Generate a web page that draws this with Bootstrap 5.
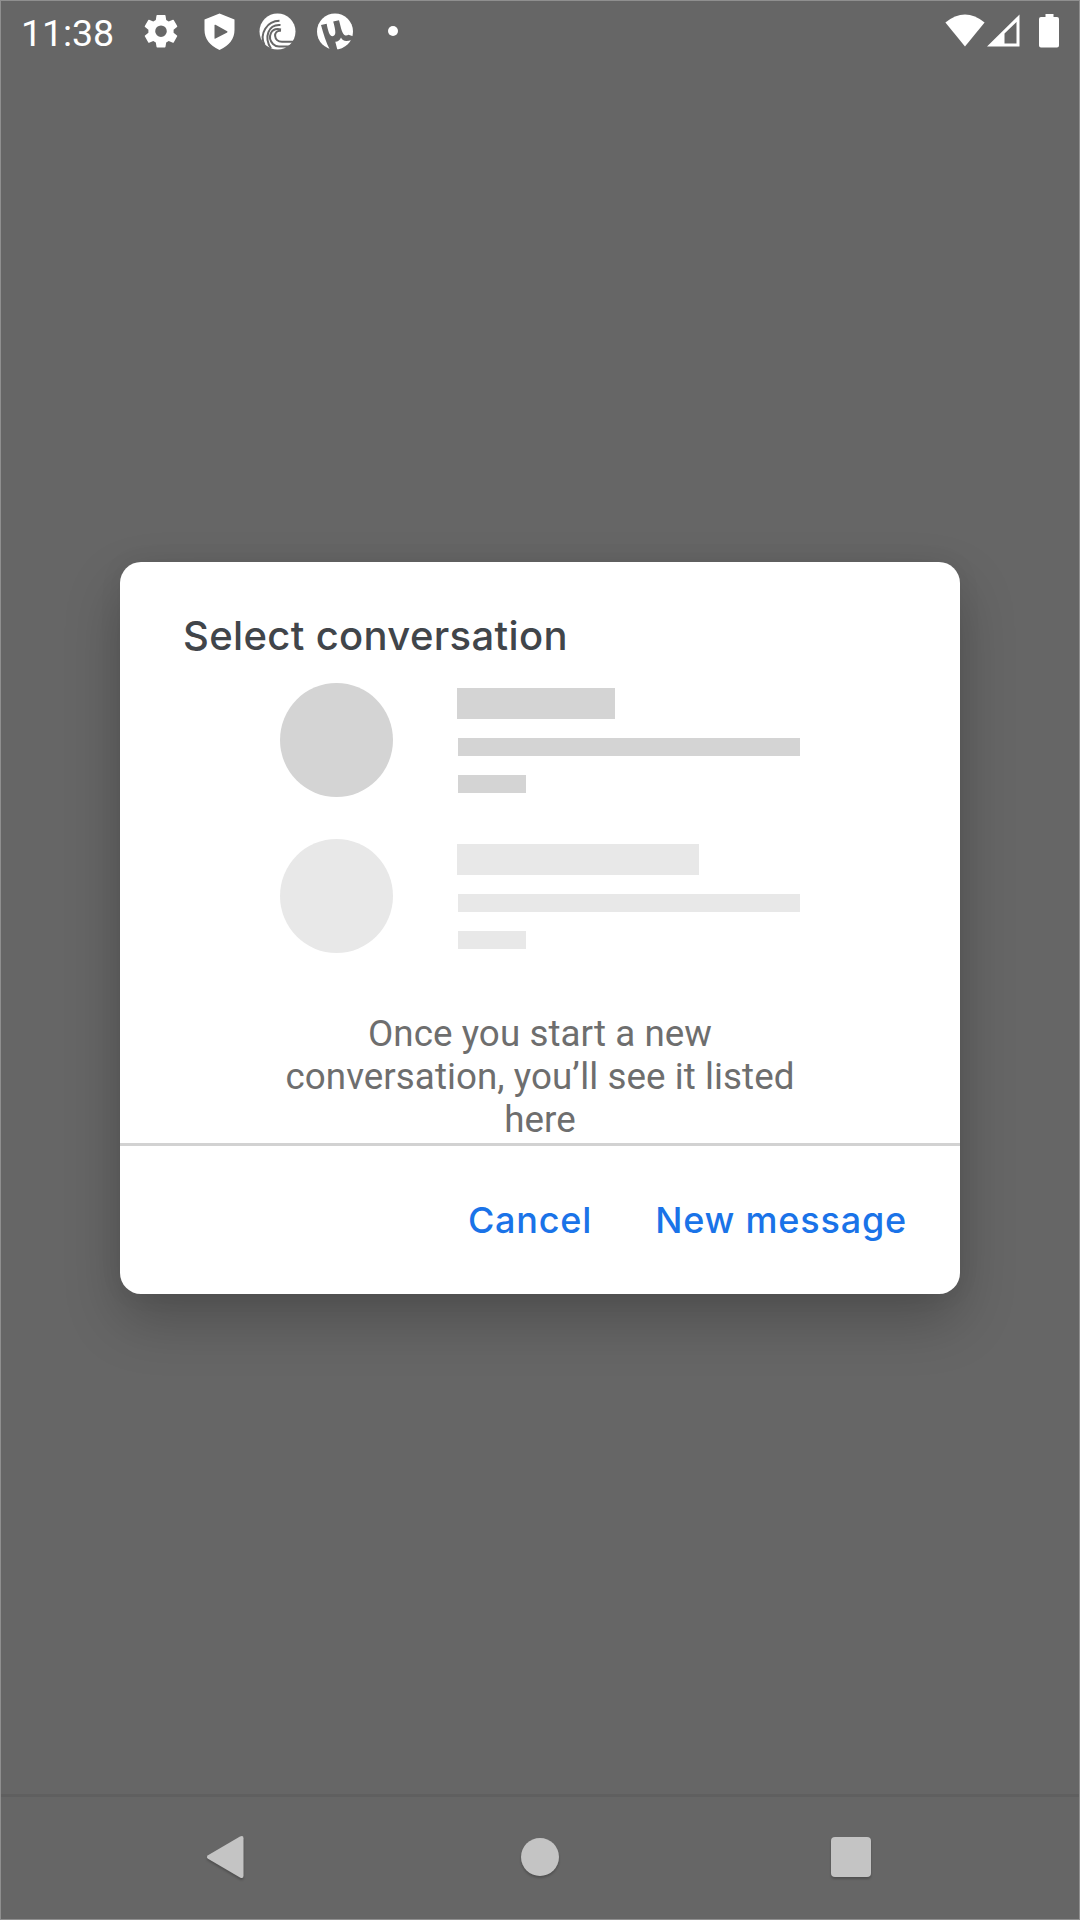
<!DOCTYPE html>
<html lang="en">
<head>
<meta charset="utf-8">
<meta name="viewport" content="width=device-width, initial-scale=1">
<title>Select conversation</title>
<link rel="stylesheet" href="https://cdn.jsdelivr.net/npm/bootstrap@5.3.0/dist/css/bootstrap.min.css">
<style>
body{background:#666;font-family:Roboto,sans-serif}
.screen{width:1080px;height:1920px;border:1px solid #8f8f8f;background:#666;overflow:hidden}
.statusbar{height:62px;padding:12px 19px 0 20px;color:#fff}
.statusbar svg{display:block;flex:none}
.clock{font-size:37.5px;line-height:40px;width:122px;letter-spacing:-.1px;white-space:nowrap}
.notif{gap:20px}
.stage{padding:499px 119px 0}
.dialog-box{height:732px;border-radius:21px;background:#fff;box-shadow:0 26px 56px rgba(0,0,0,.23),0 0 24px rgba(0,0,0,.06)}
.dialog-title{font:500 40px/48px Inter,sans-serif;letter-spacing:.34px;color:#41454a;margin:50px 0 0 63px;white-space:nowrap}
.placeholder-list{margin:23px 0 0 160px;gap:42px}
.conv{gap:64px;height:114px;color:#d4d4d4}
.conv.faint{color:#e8e8e8}
.avatar-dot{width:113px;height:114px;border-radius:50%;background:currentColor}
.bars{padding-top:5px}
.bars div{background:currentColor;height:18px;margin-left:1px}
.bars .b-name{height:31px;width:158px;margin:0 0 19px}
.faint .b-name{width:242px}
.bars .b-long{width:342px;margin-bottom:19px}
.bars .b-short{width:68px}
.hint{font-size:36.75px;line-height:43px;letter-spacing:.06px;color:#6e6e6e;margin-top:59px;height:131px;white-space:nowrap}
.rule{height:3px;background:#d2d2d2}
.actions{padding:50px 53px 0 0;gap:63px}
.act{border:0;background:none;padding:0;color:#1a73e8;font:500 36px/48px Inter,sans-serif;letter-spacing:.8px;white-space:nowrap}
.navbar-sys{height:125px;border-top:3px solid #5f5f5f}
.navbar-sys svg{display:block;filter:drop-shadow(0 2px 1px rgba(0,0,0,.22))}
</style>
<script src="https://cdn.jsdelivr.net/npm/bootstrap@5.3.0/dist/js/bootstrap.bundle.min.js"></script>
</head>
<body>
<div class="screen d-flex flex-column">
  <header class="statusbar d-flex align-items-start">
    <div class="clock"><span>11:38</span></div>
    <div class="d-flex notif">
      <!-- settings -->
      <svg width="38" height="38" viewBox="0 0 38 38"><path fill="#fff" fill-rule="evenodd" d="M14.200 2h7.600q.6 0 .7.600l.7 4.300 2.500 1.500 4.200-1.700q.5-.2.800.3l3.500 6.100q.3.500-.2.900l-3.400 2.700v3l3.400 2.700q.5.400.2.900l-3.500 6.100q-.3.500-.8.300l-4.200-1.700-2.500 1.500-.7 4.300q-.1.600-.7.600h-7.600q-.6 0-.7-.600l-.7-4.300-2.500-1.500-4.200 1.700q-.5.200-.8-.3l-3.500-6.100q-.3-.5.200-.9l3.400-2.700v-3l-3.400-2.700q-.5-.4-.2-.9l3.500-6.100q.3-.5.800-.3l4.200 1.700 2.500-1.500.7-4.300q.1-.6.700-.600zM18 12.400a5.800 5.800 0 1 0 0 11.600a5.800 5.800 0 1 0 0-11.600z"/></svg>
      <!-- play protect -->
      <svg width="38" height="38" viewBox="0 0 38 38"><path fill="#fff" fill-rule="evenodd" d="M18.500.5L33.500 6.400V17q0 13-15 20Q3.500 30 3.500 17V6.400zM13.500 12v13.400q.4.500 1 .2l11.700-6.200q.6-.6 0-1.200L14.500 11.800q-.7-.3-1 .2z"/></svg>
      <!-- bittorrent -->
      <svg width="38" height="38" viewBox="0 0 38 38"><circle cx="18.500" cy="18.500" r="18" fill="#fff"/><g fill="none" stroke="#666" stroke-width="2"><path d="M20.500 7.800C8 8 0 20.500 5.500 32"/><path d="M21.500 12C9.500 11 4.500 24 12 35.500"/><path d="M22 16.500C11.500 14 8 24.500 14 31Q16.500 33.500 20 33.500H31"/><path d="M22 17.800c-8.500-1-7.500 11 1 11H36"/></g></svg>
      <!-- utorrent -->
      <svg width="36" height="38" viewBox="0 0 36 38"><circle cx="18" cy="18.500" r="18" fill="#fff"/><path fill="#666" d="M4 12L9.700 10.700C11 18 12.500 23 15.500 23.200C19.500 23 18.800 18 16.200 8.600L22 7.300C24 15 25.400 22.300 28.500 22.500Q30.300 22.700 31.500 21.700L36.500 23.500L34.500 27Q26 29.800 24 24.500Q22.500 28.500 18.300 28.800L20.700 38H13.500C8.800 29 6.400 21 4 12z"/></svg>
      <svg width="38" height="38" viewBox="0 0 38 38"><circle cx="20" cy="18" r="5" fill="#fff"/></svg>
    </div>
    <div class="d-flex ms-auto">
      <svg width="40" height="38" viewBox="0 0 40 38"><path fill="#fff" d="M.4 9.500Q20 -6.500 39.600 9.500L20 33.500z"/></svg>
      <svg width="53" height="38" viewBox="0 0 53 38"><path fill="#fff" fill-rule="evenodd" d="M2 33.500L34.500 1.500V33.500zM31.500 9V30.500H19.500V20.500z"/></svg>
      <svg width="22" height="38" viewBox="0 0 22 38"><path fill="#fff" d="M7.500 1h8v3h3.500q2 0 2 2v26.500q0 2-2 2H3q-2 0-2-2V6q0-2 2-2h4.500z"/></svg>
    </div>
  </header>
  <main class="stage flex-grow-1">
    <section class="dialog-box d-flex flex-column">
      <h1 class="dialog-title"><span>Select conversation</span></h1>
      <div class="placeholder-list d-flex flex-column">
        <div class="conv d-flex"><div class="avatar-dot"></div><div class="bars"><div class="b-name"></div><div class="b-long"></div><div class="b-short"></div></div></div>
        <div class="conv faint d-flex"><div class="avatar-dot"></div><div class="bars"><div class="b-name"></div><div class="b-long"></div><div class="b-short"></div></div></div>
      </div>
      <p class="hint text-center mb-0">Once you start a new<br>conversation, you’ll see it listed<br>here</p>
      <div class="rule"></div>
      <div class="actions d-flex justify-content-end">
        <button class="act">Cancel</button>
        <button class="act">New message</button>
      </div>
    </section>
  </main>
  <footer class="navbar-sys d-flex">
    <svg width="1078" height="122" viewBox="1 1797 1078 122" fill="#c4c4c4">
      <path d="M208 1855.200L240 1836.400Q243.500 1834.800 243.500 1838.200V1875.800Q243.500 1879.200 240 1877.600L208 1858.800Q205.800 1857 208 1855.200z"/>
      <circle cx="540" cy="1857" r="19"/>
      <rect x="831" y="1837" width="40" height="40" rx="4"/>
    </svg>
  </footer>
</div>
</body>
</html>
